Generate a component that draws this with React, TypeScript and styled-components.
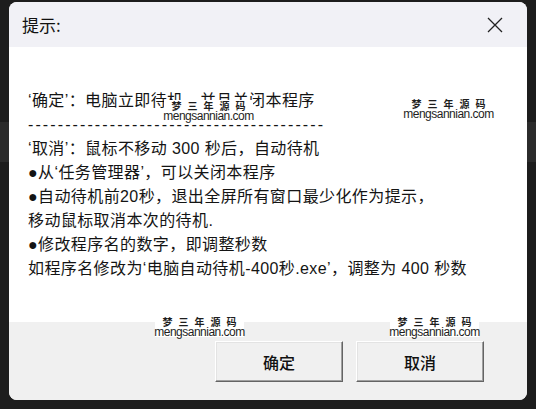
import React from 'react';
import styled, { createGlobalStyle } from 'styled-components';

const lines: string[] = [
  '‘确定’：电脑立即待机，并且关闭本程序',
  '----------------------------------------',
  '‘取消’：鼠标不移动 300 秒后，自动待机',
  '●从‘任务管理器’，可以关闭本程序',
  '●自动待机前20秒，退出全屏所有窗口最少化作为提示，',
  '移动鼠标取消本次的待机.',
  '●修改程序名的数字，即调整秒数',
  '如程序名修改为‘电脑自动待机-400秒.exe’，调整为 400 秒数',
];

const marks = [
  { x: 155, y: 98 },
  { x: 395, y: 96 },
  { x: 146, y: 314 },
  { x: 381, y: 314 },
];

const GlobalStyle = createGlobalStyle`
  html, body {
    margin: 0;
    padding: 0;
  }
  body {
    width: 536px;
    height: 409px;
    overflow: hidden;
    background: linear-gradient(to bottom, #1d1d1d 0, #1d1d1d 122px, #2b2b2b 122px, #2b2b2b 162px, #1d1d1d 162px);
    font-family: "Liberation Sans", "Noto Sans CJK SC", sans-serif;
  }
`;

const Screen = styled.div`
  padding: 2px 9px 9px 9px;
`;

const Dialog = styled.div`
  position: relative;
  width: 518px;
  height: 398px;
  border-radius: 8px;
  overflow: hidden;
  display: flex;
  flex-direction: column;
  background: #fff;
`;

const TitleBar = styled.div`
  height: 45px;
  flex: none;
  background: #f1f1f6;
  display: flex;
  align-items: center;
  justify-content: space-between;
  padding: 0 24px 0 13px;
`;

const Title = styled.span`
  font-size: 17px;
  color: #111;
  font-family: "Noto Sans CJK SC", sans-serif;
`;

const CloseIcon = styled.svg`
  width: 16px;
  height: 16px;
  display: block;
`;

const Body = styled.div`
  flex: 1;
  background: #fff;
  padding: 42px 19px 0 19px;
`;

const Line = styled.div<{ $dashed?: boolean }>`
  font-size: 16px;
  line-height: 24px;
  height: 24px;
  color: #141414;
  white-space: nowrap;
  letter-spacing: ${p => (p.$dashed ? '2.1px' : '0.4px')};
`;

const Footer = styled.div`
  height: 78px;
  flex: none;
  background: #f0f0f0;
  display: flex;
  justify-content: flex-end;
  align-items: flex-start;
  gap: 13px;
  padding: 19px 43px 0 0;
  box-sizing: border-box;
`;

const Button = styled.button`
  width: 128px;
  height: 41px;
  background: #f0f0f0;
  border: 1px solid;
  border-color: #ffffff #646464 #646464 #ffffff;
  box-shadow: inset -1px -1px 0 #a0a0a0, inset 1px 1px 0 #e3e3e3;
  font-family: "Noto Sans CJK SC", sans-serif;
  font-size: 16px;
  font-weight: 500;
  color: #111;
  padding: 0;
`;

const Mark = styled.div`
  position: absolute;
  width: 89px;
  height: 21px;
  background: #fff;
  display: flex;
  flex-direction: column;
  align-items: center;
  justify-content: center;
  line-height: 10px;
  color: #1e1e1e;
`;

const MarkCn = styled.span`
  font-family: "Noto Sans CJK SC", sans-serif;
  font-size: 10px;
  font-weight: 700;
  letter-spacing: 6px;
  margin-left: 6px;
`;

const MarkEn = styled.span`
  font-family: "Liberation Sans", sans-serif;
  font-size: 12px;
  letter-spacing: -0.5px;
`;

const App: React.FC = () => {
  return (
    <Screen>
      <GlobalStyle />
      <Dialog>
        <TitleBar>
          <Title>提示:</Title>
          <CloseIcon viewBox="0 0 16 16">
            <path d="M1 1 L15 15 M15 1 L1 15" stroke="#222" strokeWidth="1.3" fill="none" />
          </CloseIcon>
        </TitleBar>
        <Body>
          {lines.map((text, i) => (
            <Line key={i} $dashed={i === 1}>{text}</Line>
          ))}
        </Body>
        <Footer>
          <Button>确定</Button>
          <Button>取消</Button>
        </Footer>
        {marks.map((m, i) => (
          <Mark key={i} style={{ left: m.x, top: m.y }}>
            <MarkCn>梦三年源码</MarkCn>
            <MarkEn>mengsannian.com</MarkEn>
          </Mark>
        ))}
      </Dialog>
    </Screen>
  );
};

export default App;
